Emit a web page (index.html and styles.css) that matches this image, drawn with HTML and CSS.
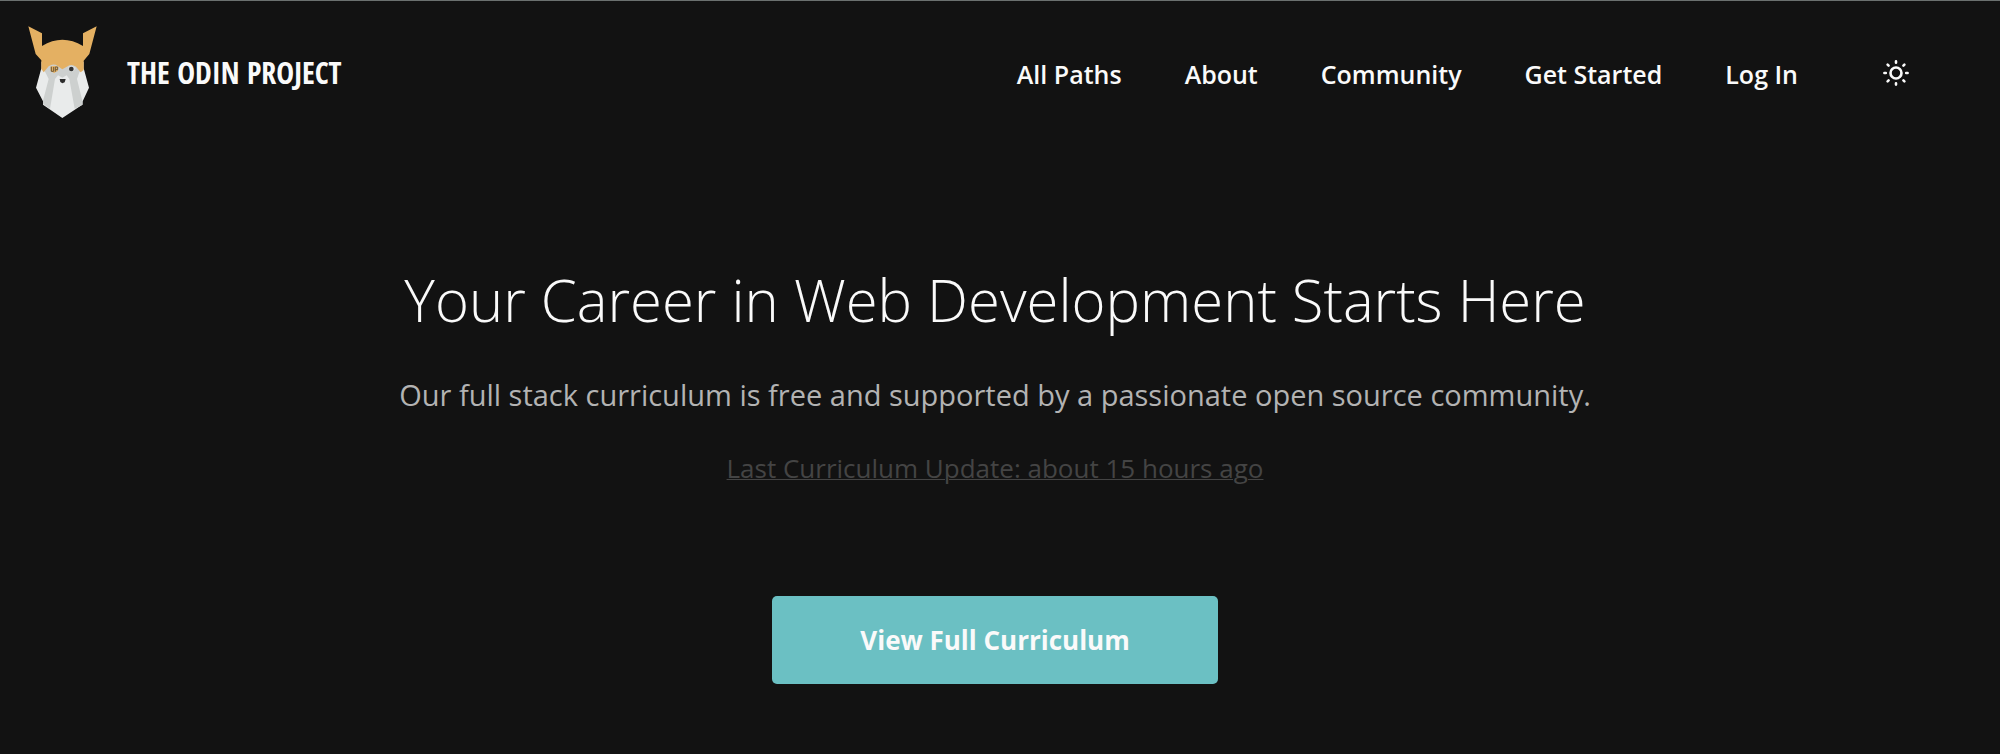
FILE: index.html
```html
<!DOCTYPE html>
<html lang="en">
<head>
<meta charset="utf-8">
<title>The Odin Project</title>
<meta name="viewport" content="width=device-width, initial-scale=1">
<link rel="stylesheet" href="styles.css">
</head>
<body class="page">
<header class="header">
  <a class="brand" href="#">
    <svg class="brand-logo" viewBox="84 78 207 276" aria-hidden="true">
      <path fill="#e9ebeb" d="M124 205L108 263L129 304V314L187 354L247 314V306L267 263L251 205Z"/>
      <path fill="#cdd0cf" d="M124 185H251V205L238 217L231 237L248 306V314L224 326L208 237L200 226L187 233L174 226L165 237L150 326L129 312V302L146 237L136 217L124 205Z"/>
      <path fill="#e4b062" d="M85 79L126 100V138Q187 100 249 138V100L290 79L268 162L251 182V210L242 217L228 200Q214 191 203 199L187 208L173 198Q160 189 146 199L131 217L124 207V181L107 162Z"/>
      <path fill="#e4b062" d="M151 200L163 197L175 201L173 213L162 219L152 213Z"/>
      <path fill="none" stroke="#6d5a3b" stroke-width="3" d="M154 200V214H161V201M166 215V201H173V209H166"/>
      <path fill="#dfe1e0" d="M205 201L215 197L228 204L220 214H208Z"/>
      <circle cx="214" cy="207" r="7" fill="#333"/>
      <path fill="#2c2c2c" d="M179 237H197L194 247L187 250L181 246Z"/>
    </svg>
    <span class="brand-name">THE ODIN PROJECT</span>
  </a>
  <nav class="nav" aria-label="Main">
    <a class="nav-link" href="#">All Paths</a>
    <a class="nav-link" href="#">About</a>
    <a class="nav-link" href="#">Community</a>
    <a class="nav-link" href="#">Get Started</a>
    <a class="nav-link" href="#">Log In</a>
    <button class="theme-toggle" type="button" aria-label="Switch theme">
      <svg class="theme-icon" viewBox="0 0 26 26" fill="none" stroke="currentColor" stroke-width="2.6" stroke-linecap="round" aria-hidden="true">
        <circle cx="13" cy="13" r="5.5"/>
        <path d="M13 1.4V2.8M13 23.2V24.6M1.4 13H2.8M23.2 13H24.6M4.6 4.6L5.6 5.6M20.4 20.4L21.4 21.4M4.6 21.4L5.6 20.4M20.4 5.6L21.4 4.6"/>
      </svg>
    </button>
  </nav>
</header>
<main class="hero">
  <h1 class="hero-title">Your Career in Web Development Starts Here</h1>
  <p class="hero-text">Our full stack curriculum is free and supported by a passionate open source community.</p>
  <a class="hero-update" href="#">Last Curriculum Update: about 15 hours ago</a>
  <a class="hero-button" href="#">View Full Curriculum</a>
</main>
</body>
</html>
```
FILE: styles.css
```css
* {
  box-sizing: border-box;
}

.page {
  margin: 0;
  min-height: 100vh;
  border-top: 1px solid #6b706f;
  background: #121212;
  color: #fafafa;
  font-family: "Open Sans", sans-serif;
}

.header {
  display: flex;
  align-items: center;
  justify-content: space-between;
  padding: 25px 91px 0 28px;
}

.brand {
  display: flex;
  align-items: center;
  gap: 30px;
  color: #fafafa;
  text-decoration: none;
}

.brand-logo {
  width: 69px;
  height: 92px;
}

.brand-name {
  font-family: "Open Sans Condensed", "Liberation Sans Narrow", "DejaVu Sans Condensed", sans-serif;
  font-size: 30px;
  font-weight: 700;
  white-space: nowrap;
}

.nav {
  display: flex;
  align-items: center;
  gap: 63px;
  padding-top: 2px;
}

.nav-link {
  padding-top: 2px;
  color: inherit;
  font-size: 25px;
  font-weight: 600;
  line-height: 34px;
  text-decoration: none;
  white-space: nowrap;
}

.theme-toggle {
  display: flex;
  margin-left: 22px;
  padding: 0;
  border: 0;
  background: none;
  color: inherit;
  cursor: pointer;
}

.theme-icon {
  width: 26px;
  height: 26px;
}

.hero {
  display: flex;
  flex-direction: column;
  align-items: center;
  padding: 142px 10px 60px 0;
  text-align: center;
}

.hero-title {
  margin: 0;
  font-size: 58px;
  font-weight: 300;
  line-height: 80px;
}

.hero-text {
  margin: 35px 0 0;
  color: #b3b3b3;
  font-size: 29px;
  line-height: 40px;
}

.hero-update {
  margin-top: 35px;
  color: #444;
  font-size: 26px;
  font-weight: 400;
  line-height: 36px;
  text-decoration-thickness: 1px;
}

.hero-button {
  margin-top: 110px;
  padding: 26px 88px;
  border-radius: 5px;
  background: #6bc0c3;
  color: #fafafa;
  font-size: 26px;
  font-weight: 700;
  line-height: 36px;
  text-decoration: none;
}
```
